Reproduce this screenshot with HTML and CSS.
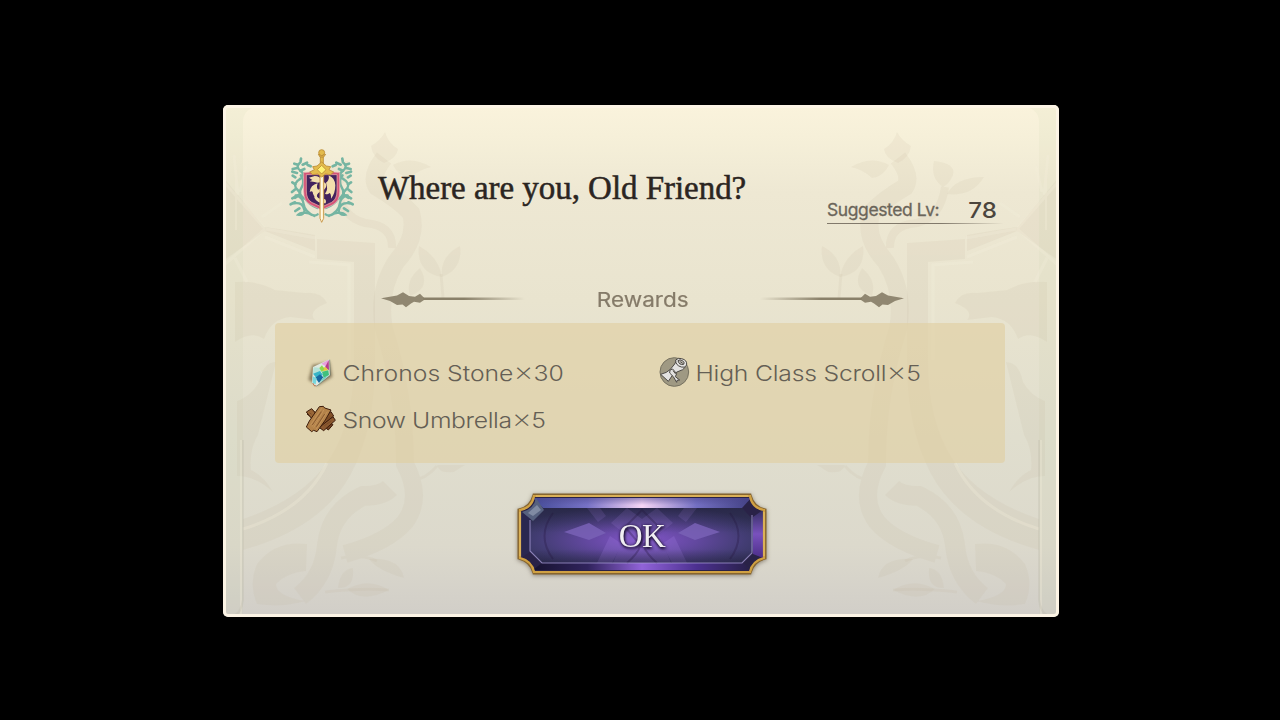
FILE: index.html
```html
<!DOCTYPE html>
<html lang="en">
<head>
  <meta charset="UTF-8" />
  <title>Where are you, Old Friend?</title>
  <link rel="stylesheet" href="styles.css">
</head>
<body>

  <main class="dialog">
    <!-- crest watermark, one half drawn and mirrored -->
    <svg class="dialog-bg" viewBox="223 105 836 512" aria-hidden="true">
      <defs>
        <g id="half">
          <path class="side" d="M1020 105h39v512h-20V122q0-14-19-17z"/>
          <g class="shade">
            <path d="M897 132q4 8 14 14q-2 12-13 17q-13-5-14-14q10-6 13-17z"/>
            <path d="M851 167q20-12 38-2q-6 12-17 13q-8-8-21-11z"/>
            <path d="M934 161q22 2 19 14q-4 9-10 12q-13-9-9-26z"/>
            <path d="M984 177q-12 20-37 17q9-17 37-17z"/>
            <path d="M822 246q21 11 18 31q-21-8-18-31z"/>
            <path d="M863 246q3 27-23 31q3-20 23-31z"/>
            <path d="M862 268q15 12 10 28q-22-8-10-28z"/>
            <path d="M907 243l58-4v20l-37 3v98q0 60 24 98q25 40 87 61v31q-79-22-108-76q-24-45-24-110z"/>
            <path d="M955 303q6-12 22-10l30-3q18-10 40-8v60q-17-12-29-3q-7-20-26-22l-25 3q8-9-12-17z"/>
            <path d="M1006 362q13 0 17 20q8 14 22 19v75q-18 0-36 16q9-16 22-22q2-20-7-35z"/>
            <path d="M967 235q35-6 51-8l41-50v84l-42-30-50 20z"/>
            <path d="M878 578q4-21 35-19q-9 12-35 19z"/>
            <path d="M893 590q20-13 42-1q-15 15-42 1z"/>
            <path d="M929 568q13 1 15 20q-17 1-15-20z"/>
            <path d="M817 465h28q-2 9-17 7z"/>
            <path d="M975 544q32-4 50 20q9 20 0 40q-26 4-48-3q29-5 29-17q-10-11-30-13z"/>
          </g>
          <g class="vine">
            <path d="M898 158q14 18 7 29q-22 13-34 26q-7 25 15 49q19 30 12 67q-21 65-21 135q-18 34 0 58q17 20 60 32" stroke-width="18"/>
            <path d="M890 248q-1-23 27-25q24-6 28-36" stroke-width="8"/>
            <path d="M841 274l-2 24" stroke-width="3"/>
            <path d="M892 488q8 8 27 8q32 15 36 49q3 33 27 51" stroke-width="20"/>
            <path d="M845 466q12 14 25 14M893 590q29-2 64 2M905 561q15-7 36-3" stroke-width="3"/>
          </g>
          <g class="shine">
            <path d="M1017 229l42-48M1017 229l42 37M966 238l50-9M967 257l50-20M1000 203l20 14M1048 155l-4 40M1036 166l6 26M933 360v-95l40-3M1035 282l12-24M955 463q22 47 84 66"/>
            <path d="M1041 440v175M1046 170v60" class="line-thin"/>
          </g>
          <path class="pole" d="M1039 440v160q2 13 8 15"/>
        </g>
      </defs>
      <use href="#half"/>
      <use href="#half" transform="translate(1282 0) scale(-1 1)"/>
    </svg>

    <header class="quest">
      <svg class="crest" viewBox="57 24 198 228" aria-hidden="true">
        <g class="laurel">
          <path d="M92 66q-18 14 0 27t-9 29q-15 15 0 28t-8 24M92 106q15 18 2 38t13 34q13 18 35 26M77 166q22 5 24 26t32 36M72 190q27-5 32 22q-4 15-20 12q8-10 32-4q16 11 27 3"/>
          <path d="M218 66q18 14 0 27t9 29q15 15 0 28t8 24M218 106q-15 18-2 38t-13 34q-13 18-35 26M233 166q-22 5-24 26t-32 36M238 190q-27-5-32 22q4 15 20 12q-8-10-32-4q-16 11-27 3"/>
          <path class="leaves" d="M92 62l1-6M84 74l-11-3M98 74l13-6M82 84l-14 3M81 99l-14-4M76 112l-8-5M91 92l12-5M76 133l-9-6M76 148l-10 8M82 166l-15 9M75 187l-13 6M88 205l-12 8M113 75l9 4M218 62l-1-6M226 74l11-3M212 74l-13-6M228 84l14 3M229 99l14-4M234 112l8-5M219 92l-12-5M234 133l9-6M234 148l10 8M228 166l15 9M235 187l13 6M222 205l12 8M197 75l-9 4"/>
        </g>
        <path class="shield" d="M101 97q18 1 31-4h46q15 5 31 4v57q0 30-20 40l-34 16l-34-16q-20-10-20-40z"/>
        <path class="shield-line" d="M109 104h92v49q0 25-16 34l-30 14l-30-14q-16-9-16-34z"/>
        <g class="dragon">
          <path d="M117 113l17-5q17 0 20 14q-6 10-20 4l-15-2l8-4z"/>
          <path d="M143 130q-22 5-24 27q5-6 9-1q1 12 12 17q-1-14 11-18q-15-7-8-25z"/>
          <path d="M168 128q11-7 8-22q19 8 20 30q0 24-13 40q1-15-5-17q-5 6-13 2q11-13 3-33z"/>
          <path d="M160 125q14 6 7 18t-23 14q-10 16 8 20q20-3 15 13q-25 1-34-17q-2-23 19-27q9-6 8-21z"/>
        </g>
        <path class="blade" d="M150 108h11v127l-6 12l-5-12z"/>
        <path class="blade-light" d="M155 107v134"/>
        <g class="gold">
          <path d="M151 50h9v22h-9z"/>
          <circle cx="155" cy="38" r="9"/>
          <path d="M145 43l5 8h11l6-8l-12 4z"/>
          <path d="M119 96l14-7l-5-9l13-2l14-12l14 12l13 2l-5 9l14 7l-9 8l-15-2l-12 9l-12-9l-15 2z"/>
          <path class="jewel" d="M155 76l13 13l-13 13l-13-13z"/>
        </g>
      </svg>
      <h1>Where are you, Old Friend?</h1>
      <p class="level"><span class="level-label">Suggested Lv:</span><span class="level-num">78</span></p>
    </header>

    <div class="divider">
      <svg class="ornament" viewBox="0 0 144 20" aria-hidden="true">
        <defs>
          <linearGradient id="fade"><stop offset="0" stop-color="#898069"/><stop offset=".4" stop-color="#898069"/><stop offset="1" stop-color="#898069" stop-opacity="0"/></linearGradient>
          <path id="spear" fill="#908771" d="M0 9.3L16 6.5L22 3.3L28 7L34 7.7L39 4.7L43 8.7V11L39 13.7L33 12.7L30 14.5L25 18.3L21.5 15.5L16 16L9 12z"/>
        </defs>
        <use href="#spear"/>
        <path fill="url(#fade)" d="M42 8.4h102v2.6H42z"/>
      </svg>
      <h2>Rewards</h2>
      <svg class="ornament flip" viewBox="0 0 144 20" aria-hidden="true">
        <use href="#spear"/>
        <path fill="url(#fade)" d="M42 8.4h102v2.6H42z"/>
      </svg>
    </div>

    <ul class="rewards">
      <li>
        <svg viewBox="30 16 96 96" aria-hidden="true">
          <defs><filter id="soft"><feGaussianBlur stdDeviation="4"/></filter></defs>
          <path d="M52 40l52-10l8 45l-44 27l-28-18z" fill="#77684a" opacity=".8" filter="url(#soft)"/>
          <path d="M103 23l2 48l-42 34l-12-9l3-50z" fill="#dfe9e0"/>
          <path d="M56 47l23 2l-5 23l-20-7z" fill="#b5e3d8"/>
          <path d="M79 36l22-12l-3 23z" fill="#e8a0dc"/>
          <path d="M101 26l1 30l-12-9z" fill="#b73d8c"/>
          <path d="M79 49l13-3l8 10l-18 3z" fill="#e4c83f"/>
          <path d="M73 49l8-8l7 11l-8 9z" fill="#8cd94d"/>
          <path d="M81 60l19-4l2 14l-16 9z" fill="#3fc07d"/>
          <path d="M54 66l21-8l9 12l-19 10z" fill="#36b4c8"/>
          <path d="M61 78l14-10l10 9l-13 17z" fill="#1768a0"/>
          <path d="M53 74l12 6l-3 18l-9-4z" fill="#77d7dd"/>
          <path d="M73 95l12-17l17-7z" fill="#6bcfc1"/>
          <path d="M53 94l6 9l5-1" fill="none" stroke="#b76c45" stroke-width="3"/>
          <path d="M104 24l2 47l-42 33" fill="none" stroke="#67776b" stroke-width="2"/>
        </svg>
        <span>Chronos Stone<b>×</b>30</span>
      </li>
      <li>
        <svg viewBox="25 22 96 96" aria-hidden="true">
          <circle cx="74" cy="67" r="43" fill="#9f9983" stroke="#777260" stroke-width="3"/>
          <g fill="#e3e2e0" stroke="#4b4844" stroke-width="3" stroke-linejoin="round">
            <path d="M79 35l28 17l-8 8l-17 7l-13 9l-13 19l-23-21l17-6l12-9l13-16z"/>
            <path d="M78 31q8-8 18-4q17 4 15 19q-5 10-16 6q-18-5-17-21z"/>
            <path d="M85 33q6-5 13 0q9 5 4 11q-14 3-17-11z" fill="#b8b5ae"/>
            <path d="M61 61l8-3l12 14l-4 9l13 10l-8 1l-1 6l-10-17l-11-11z"/>
          </g>
          <path d="M92 36l7 5M70 63l8 10" stroke="#55514a" stroke-width="3"/>
        </svg>
        <span class="tight">High Class Scroll<b>×</b>5</span>
      </li>
      <li>
        <svg viewBox="32 160 96 96" aria-hidden="true">
          <g stroke="#3c1c0c" stroke-width="3" stroke-linejoin="round">
            <path d="M38 190l14-12l64 44l-14 16z" fill="#704020"/>
            <path d="M73 229l43-31l7 11l-35 31z" fill="#8b5930"/>
            <path d="M67 213l43-30l8 13l-39 31z" fill="#825027"/>
            <path d="M36 184l16-10l26 30l-16 12z" fill="#9a6737"/>
            <path d="M36 229l9-18l30-43l12-1l4 5l19 6l-17 30l-25 35l-10-4l-6 4z" fill="#b38249"/>
          </g>
          <path d="M48 224l34-51M58 231l31-54M66 235l33-52M53 228l19-29" stroke="#cb9c60" stroke-width="2"/>
          <path d="M54 223l27-40M66 228l25-38M94 207l14-9M90 225l19-13M45 186l7 5" stroke="#704221" stroke-width="2"/>
        </svg>
        <span class="tighter">Snow Umbrella<b>×</b>5</span>
      </li>
    </ul>

    <button class="ok" type="button">
      <svg viewBox="0 0 250 82" aria-hidden="true">
        <defs>
          <radialGradient id="face" cx=".5" cy=".58" r=".62"><stop offset="0" stop-color="#8355c9"/><stop offset=".4" stop-color="#62489f"/><stop offset=".75" stop-color="#433d74"/><stop offset="1" stop-color="#33345a"/></radialGradient>
          <linearGradient id="top"><stop offset="0" stop-color="#454c98"/><stop offset=".25" stop-color="#7772c6"/><stop offset=".5" stop-color="#f6d5f5"/><stop offset=".75" stop-color="#736fc2"/><stop offset="1" stop-color="#424184"/></linearGradient>
          <linearGradient id="topshade" x2="0" y2="1"><stop offset="0" stop-color="#4b458c" stop-opacity=".5"/><stop offset=".7" stop-color="#4b458c" stop-opacity="0"/></linearGradient>
          <linearGradient id="bottom"><stop offset="0" stop-color="#171330"/><stop offset=".25" stop-color="#30235c"/><stop offset=".5" stop-color="#9163d8"/><stop offset=".75" stop-color="#4c3090"/><stop offset="1" stop-color="#272047"/></linearGradient>
          <linearGradient id="rightside" x2="0" y2="1"><stop offset="0" stop-color="#343061"/><stop offset=".5" stop-color="#7951bd"/><stop offset="1" stop-color="#4c2e88"/></linearGradient>
          <linearGradient id="gloss" x2="0" y2="1"><stop offset="0" stop-color="#171329" stop-opacity=".35"/><stop offset=".45" stop-color="#171329" stop-opacity="0"/><stop offset=".75" stop-color="#171329" stop-opacity="0"/><stop offset="1" stop-color="#171329" stop-opacity=".35"/></linearGradient>
        </defs>
        <path d="M17 2H233Q236 14 248 17V65Q236 68 233 80H17Q14 68 2 65V17Q14 14 17 2Z" fill="#292247" stroke="#86652f" stroke-width="3"/>
        <path d="M16 5H234L225 15H26z" fill="url(#top)"/>
        <path d="M16 5H234L225 15H26z" fill="url(#topshade)"/>
        <path d="M16 77H234L225 69H26z" fill="url(#bottom)"/>
        <path d="M246 17V65L236 61V24z" fill="url(#rightside)"/>
        <path d="M4 18V65L13 59V24z" fill="#292750"/>
        <path d="M25 15H225L236 27V58L225 70H25L13 58V27z" fill="url(#face)"/>
        <g fill="#a583e6" opacity=".22">
          <path d="M110 15l15 11 15-11 16 15-14 11 12 29h-58l12-29-14-11z"/>
          <path d="M93 43l12 8-10 19H80zM157 43l-12 8 10 19h15zM70 15h13l6 8-8 6zM180 15h-13l-6 8 8 6z"/>
        </g>
        <g fill="none" stroke="#23153f" opacity=".3" stroke-width="2">
          <path d="M125 17l17 17-17 20-17-20zM110 70q20-17 15-36q-5 19 15 36M36 20q-17 23 0 46M213 20q17 23 0 46"/>
        </g>
        <path d="M25 15H225L236 27V58L225 70H25L13 58V27z" fill="url(#gloss)"/>
        <path d="M47 39l25-9 17 10-17 7zM203 39l-25-9-17 10 17 7z" fill="#7962b6" opacity=".85"/>
        <path d="M5 19q12-3 14-14l8 12-11 11z" fill="#56617f"/>
        <path d="M11 20l9-8 4 5-8 6z" fill="#aab5c8" opacity=".5"/>
        <path d="M13 27V58L25 70H225L235 60V22" fill="none" stroke="#a89cd7" stroke-width="1.1" opacity=".75"/>
        <path d="M17 3H233Q235 15 247 17V65Q235 68 233 79H17Q15 68 3 65V17Q15 15 17 3Z" fill="none" stroke="#d0a143" stroke-width="2.2"/>
        <path d="M19 3H231M3 19v44M247 19v44" stroke="#ebca78" stroke-width=".8"/>
      </svg>
      <span>OK</span>
    </button>
  </main>

</body>
</html>
```

FILE: styles.css
```css
* {
  box-sizing: border-box;
}

body {
  margin: 0;
  height: 720px;
  overflow: hidden;
  background: #000;
  color: #6b655a;
  font-family: Inter, "Liberation Sans", sans-serif;
}

h1, h2, p, ul {
  margin: 0;
  padding: 0;
  font-weight: normal;
}

.dialog {
  position: relative;
  display: flex;
  flex-direction: column;
  align-items: center;
  width: 836px;
  height: 512px;
  margin: 105px 0 0 223px;
  border-radius: 5px;
  overflow: hidden;
  background: linear-gradient(#faf3dc, #f6f0d9 6%, #eee8d3 17%, #e9e4cf 38%, #e0dece 65%, #dcd9cc 86%, #d1cec8);
}

/* border is laid over the watermark */
.dialog::after {
  content: "";
  position: absolute;
  inset: 0;
  border: 3px solid #fcf4e5;
  border-radius: 5px;
  pointer-events: none;
}

.dialog-bg {
  position: absolute;
  inset: 0;
  width: 836px;
  height: 512px;
}

.side { fill: #c2c39c; opacity: .09; }
.shade { fill: #bcae94; opacity: .11; }
.vine { fill: none; stroke: #bcae94; opacity: .11; }
.shine { fill: none; stroke: #f3eedb; stroke-width: 3; opacity: .3; }
.line-thin { stroke-width: 2; }
.pole { fill: none; stroke: #b9b2a4; stroke-width: 2; opacity: .25; }

.quest,
.divider,
.rewards,
.ok {
  position: relative;
}

.quest {
  display: flex;
  align-items: flex-start;
  width: 100%;
  height: 180px;
  padding: 43px 0 0 66px;
}

.crest {
  flex: none;
  width: 66px;
  height: 76px;
}

.laurel { fill: none; stroke: #75b5a2; stroke-width: 7; stroke-linecap: round; }
.leaves { stroke-width: 8; }
.shield { fill: #d45478; stroke: #e8bbb7; stroke-width: 2; }
.shield-line { fill: #43235e; stroke: #f0b6ae; stroke-width: 2; }
.dragon { fill: #f3dfad; }
.blade { fill: #fff1c9; stroke: #c99a4f; stroke-width: 3; }
.blade-light { stroke: #fffbea; stroke-width: 3; }
.gold { fill: #e3bb4c; stroke: #b98a35; stroke-width: 2.5; }
.jewel { fill: #fff375; }

.quest h1 {
  width: 370px;
  margin: 21px 0 0 23px;
  color: #2b2521;
  font: 33px/38px "Liberation Serif", serif;
  letter-spacing: -.04px;
  white-space: nowrap;
  -webkit-text-stroke: .5px #2b2521;
}

.level {
  display: flex;
  align-items: baseline;
  justify-content: space-between;
  width: 176px;
  height: 28px;
  margin: 48px 0 0 79px;
  padding-right: 6px;
  border-bottom: 1px solid;
  border-image: linear-gradient(90deg, #81796b 65%, transparent) 1;
  line-height: 25px;
}

.level-label {
  font-size: 17.5px;
  letter-spacing: -.4px;
  -webkit-text-stroke: .3px;
}

.level-num {
  color: #4b453d;
  font-size: 21px;
  font-weight: 500;
  transform: translateY(2px) scaleX(1.15);
  transform-origin: right;
}

.divider {
  display: flex;
  justify-content: space-between;
  align-items: center;
  width: 524px;
  height: 28px;
  margin-left: 3px;
}

.ornament {
  width: 144px;
  height: 20px;
}

.flip {
  transform: scaleX(-1);
}

.divider h2 {
  padding-top: 2px;
  color: #857b69;
  font-size: 20.5px;
  line-height: 28px;
  transform: scaleX(1.1);
  -webkit-text-stroke: .2px;
}

.rewards {
  display: grid;
  grid-template-columns: 353px 1fr;
  grid-auto-rows: 47px;
  width: 730px;
  height: 140px;
  margin: 10px 0 0 -2px;
  padding: 26px 0 0 30px;
  border-radius: 4px;
  background: rgba(225, 208, 163, .65);
  list-style: none;
}

.rewards li {
  display: flex;
  align-items: center;
  gap: 6px;
  color: #655f55;
  font-size: 21.5px;
  font-weight: 300;
  white-space: nowrap;
}

/* stretched to a wide face */
.rewards span {
  padding-top: 2px;
  line-height: 45px;
  transform: translateX(-.5px) scaleX(1.15);
  transform-origin: left;
}

.rewards .tight {
  letter-spacing: -.18px;
}

.rewards .tighter {
  letter-spacing: -.33px;
}

.rewards b {
  font-size: 27px;
  font-weight: 200;
  line-height: 20px;
}

.rewards svg {
  flex: none;
  width: 32px;
  height: 32px;
}

.ok {
  display: grid;
  place-items: center;
  width: 250px;
  height: 82px;
  margin: 30px 0 0 1px;
  padding: 0;
  border: 0;
  background: none;
  filter: drop-shadow(0 1px 2px rgba(60, 45, 30, .5));
  cursor: pointer;
}

.ok svg,
.ok span {
  grid-area: 1 / 1;
}

.ok svg {
  width: 250px;
  height: 82px;
}

.ok span {
  position: relative;
  padding: 3px 0 0 1px;
  color: #f0eef2;
  font: 33px/36px "Liberation Serif", serif;
  letter-spacing: -.5px;
  text-shadow: 0 0 3px #160d2b, 1px 2px 3px #160d2b;
}
```
